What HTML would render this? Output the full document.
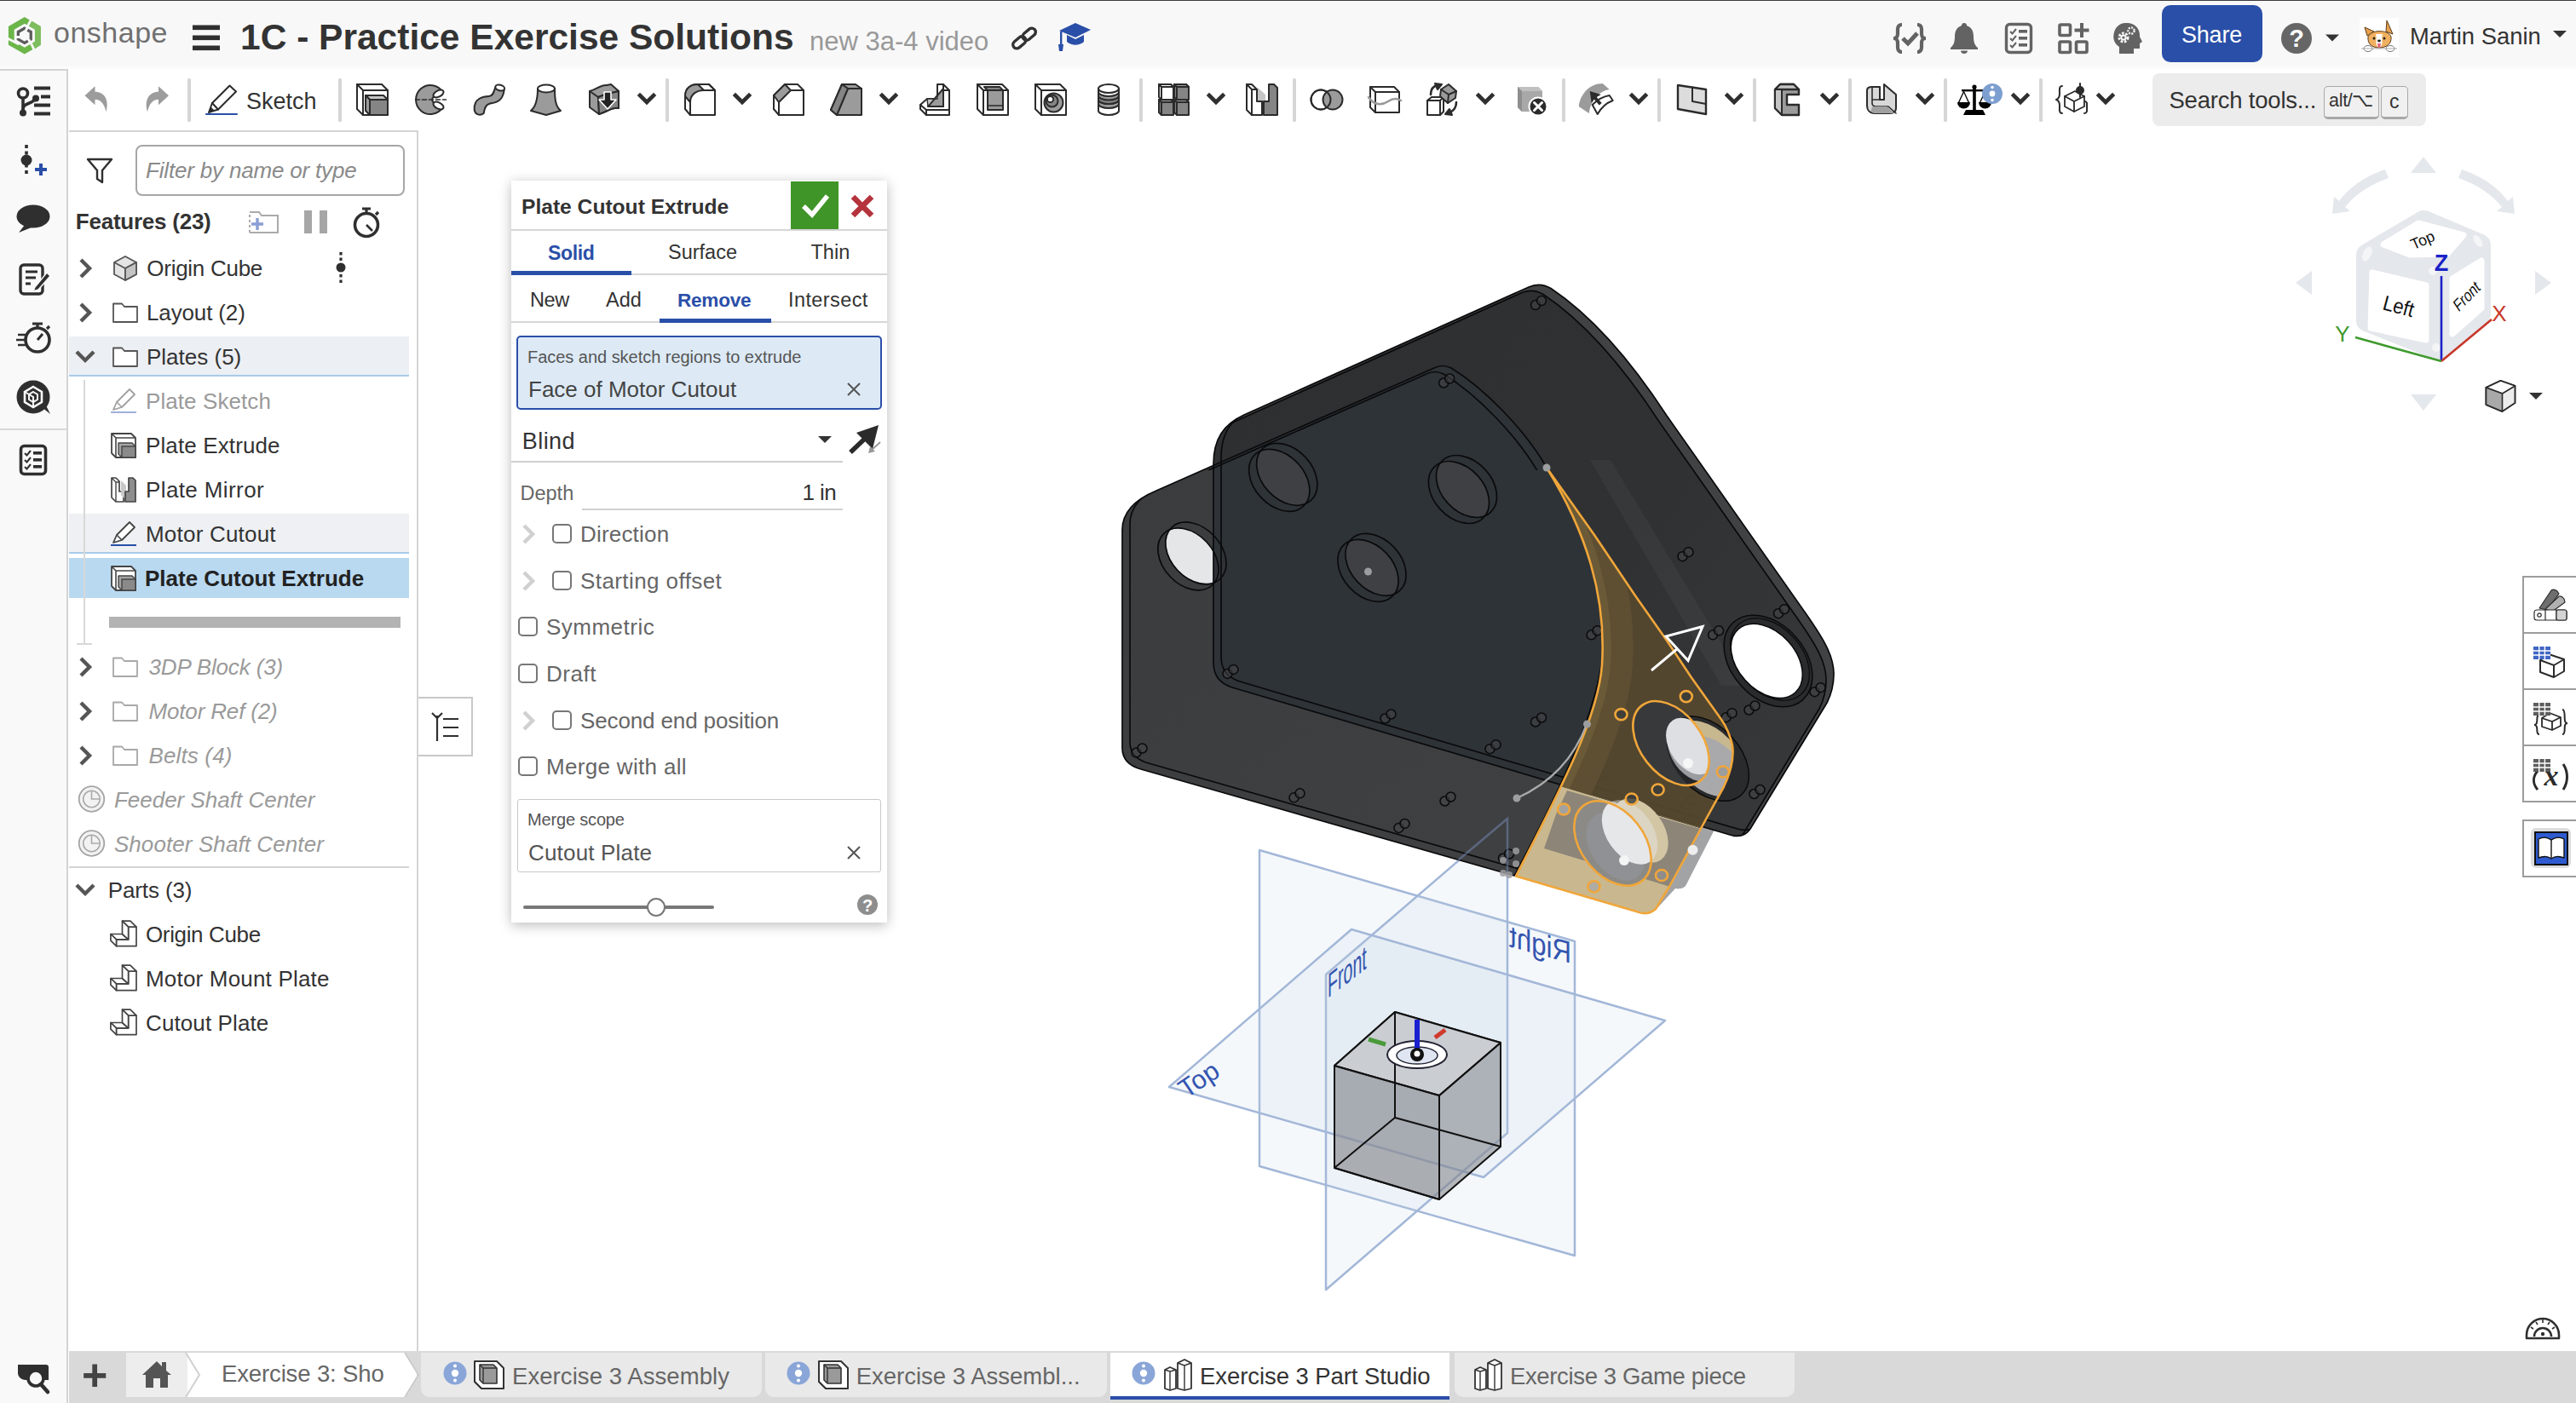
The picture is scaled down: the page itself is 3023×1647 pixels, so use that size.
<!DOCTYPE html>
<html lang="en">
<head>
<meta charset="utf-8">
<title>1C - Practice Exercise Solutions | Exercise 3 Part Studio</title>
<style>
html,body{margin:0;padding:0;}
body{width:3023px;height:1647px;position:relative;overflow:hidden;background:#fff;font-family:"Liberation Sans",sans-serif;color:#333;}
.abs{position:absolute;}
.t{position:absolute;white-space:nowrap;line-height:1;transform:translateY(-50%);}
svg{position:absolute;overflow:visible;}
#topline{left:0;top:0;width:3023px;height:1.4px;background:#3c3c3c;}
#header{left:0;top:0;width:3023px;height:82px;background:linear-gradient(#f8f8f8 0,#f8f8f8 77px,#fff 82px);}
#sidebar{left:0;top:81px;width:78px;height:1566px;background:#f9f9f9;border-right:2px solid #d3d3d3;border-top:2px solid #d3d3d3;box-sizing:content-box;}
#toolbar{left:81px;top:82px;width:2942px;height:71px;background:#fff;}
#fpanel{left:81px;top:153px;width:408px;height:1436px;background:#fff;border-top:2px solid #d4d4d4;border-right:2px solid #d4d4d4;}
#tabbar{left:81px;top:1586px;width:2942px;height:61px;background:#d9d9d9;}

.row{position:absolute;left:81px;width:399px;}
.li{font-size:26px;color:#333;}
.gray{color:#9a9a9a;}
.it{font-style:italic;}
.b{font-weight:bold;}
.dl{font-size:26px;color:#666;}
.cb{position:absolute;width:19px;height:19px;border:2px solid #777;border-radius:5px;background:#fff;}
.tab{position:absolute;top:1588px;height:52px;background:#e9e9e9;border-radius:0 0 10px 10px;}
.tabt{font-size:27.5px;color:#666;}
</style>
</head>
<body>
<div id="header" class="abs"></div>
<div id="topline" class="abs"></div>
<div id="toolbar" class="abs"></div>
<div id="sidebar" class="abs"></div>
<div id="fpanel" class="abs"></div>
<div id="tabbar" class="abs"></div>

<!-- header text -->
<div class="t" style="left:63.0px;top:38px;font-size:34px;color:#707070;letter-spacing:0.5px;">onshape</div>
<div class="t b" style="left:282.0px;top:44px;font-size:42.5px;color:#333;">1C - Practice Exercise Solutions</div>
<div class="t" style="left:950.0px;top:48px;font-size:31px;color:#999;">new 3a-4 video</div>
<div class="abs" style="left:2537px;top:6px;width:118px;height:67px;background:#2a4fa8;border-radius:10px;"></div>
<div class="t" style="left:2560.0px;top:41px;font-size:27px;color:#fff;letter-spacing:-0.21px;">Share</div>
<div class="t" style="left:2828.0px;top:43px;font-size:27.4px;color:#333;">Martin Sanin</div>

<!-- toolbar text -->
<div class="t" style="left:289.0px;top:119px;font-size:27px;color:#333;">Sketch</div>
<div class="abs" style="left:2526px;top:86px;width:321px;height:62px;background:#ececec;border-radius:8px;"></div>
<div class="t" style="left:2545.4px;top:118px;font-size:27.5px;color:#333;letter-spacing:-0.20px;">Search tools...</div>
<div class="abs" style="left:2727px;top:101px;width:63px;height:35px;border:1.5px solid #a8a8a8;border-bottom:3px solid #a8a8a8;border-radius:5px;background:#f0f0f0;"></div>
<div class="t" style="left:2733px;top:119px;font-size:21.5px;color:#333;letter-spacing:-0.3px;">alt/⌥</div>
<div class="abs" style="left:2794px;top:101px;width:30px;height:35px;border:1.5px solid #a8a8a8;border-bottom:3px solid #a8a8a8;border-radius:5px;background:#f0f0f0;"></div>
<div class="t" style="left:2804px;top:119px;font-size:23px;color:#333;">c</div>
<!-- 3D viewport -->
<svg id="vp" width="3023" height="1647" viewBox="0 0 3023 1647" style="left:0;top:0;">
<defs>
<linearGradient id="gBP" x1="1424" y1="400" x2="2150" y2="900" gradientUnits="userSpaceOnUse"><stop offset="0" stop-color="#2e2f31"/><stop offset="0.6" stop-color="#303133"/><stop offset="1" stop-color="#37383a"/></linearGradient>
<linearGradient id="gFP" x1="1317" y1="560" x2="1700" y2="1030" gradientUnits="userSpaceOnUse"><stop offset="0" stop-color="#3b3c3e"/><stop offset="1" stop-color="#3f4042"/></linearGradient>
<path id="pBP" d="M1424,560 L1424,545 C1424,515 1436,498 1460,487 L1794,337 Q1807,331 1820,338.5 C1870,372 1915,425 1956,488 L2119,720 C2140,750 2152,770 2152,791 C2152,805 2148,817 2144,825 L2054,973 Q2046,985 2030,980 L1446,807 Q1424,800 1424,778 Z"/>
<path id="pFP" d="M1317,640 L1317,622 C1317,600 1333,586 1357,576 L1683,432 Q1693,427 1703,432 C1742,456 1790,505 1815,549 C1862,625 1885,700 1882,757 C1878,830 1830,930 1777,1028 L1339,903 Q1317,897 1317,878 Z"/>
<path id="pYL" d="M1815,549 C1862,625 1885,700 1880,780 C1876,840 1835,920 1779,1028.5 L1922,1070.6 Q1934,1075 1943,1067 L1959,1041 L2001,963.5 L2023,923.5 Q2036,896 2033,875 Q2029,858 2021,846 L1985,795.5 L1956.6,752.7 L1919.5,700 L1871,628 Z"/>
<clipPath id="cBP"><use href="#pBP"/></clipPath>
<clipPath id="cFP"><use href="#pFP"/></clipPath>
<clipPath id="cYL"><use href="#pYL"/></clipPath>
<clipPath id="cBelow"><path d="M1700,883 L1837,925 L2030,983 L2100,1004 L2100,1200 L1700,1200 Z"/></clipPath>
<clipPath id="cAbove"><path d="M1700,883 L1837,925 L2030,983 L2100,1004 L2200,300 L1700,300 Z"/></clipPath>
<clipPath id="cTopOnly"><rect x="1300" y="300" width="900" height="252"/></clipPath>
<clipPath id="cLeftOfBP"><rect x="1300" y="500" width="124" height="300"/></clipPath>
<g id="scr"><circle cx="-3.5" cy="2.5" r="5.5"/><circle cx="3.5" cy="-2.5" r="5.5"/></g>
</defs>
<g fill="rgba(196,211,234,0.17)" stroke="#a3b7d8" stroke-width="2.5" stroke-linejoin="round">
<path d="M1478,998 L1848,1105 L1848,1474 L1478,1369 Z"/>
<path d="M1556,1144 L1769,961 L1769,1330 L1556,1514 Z"/>
<path d="M1372,1276 L1586,1091 L1954,1198 L1741,1382 Z"/>
</g>
<g stroke="#111" stroke-width="2" stroke-linejoin="round">
<path d="M1566,1251 L1637,1188 L1761,1224 L1761,1346 L1689,1408 L1566,1371 Z" fill="rgba(128,130,134,0.55)"/>
<path d="M1566,1251 L1637,1188 L1761,1224 L1689,1286 Z" fill="rgba(225,228,232,0.55)"/>
<path d="M1566,1251 L1689,1286 L1689,1408 L1566,1371 Z" fill="rgba(150,153,158,0.25)"/>
<path d="M1637,1188 L1637,1312 L1566,1371 M1637,1312 L1761,1346 M1689,1286 L1689,1408 M1689,1286 L1761,1224" fill="none"/>
</g>
<ellipse cx="1663" cy="1238" rx="35" ry="16" fill="#fff" stroke="#223" stroke-width="2"/>
<ellipse cx="1663" cy="1239" rx="24" ry="10" fill="#dfe6f1" stroke="#223" stroke-width="1.5"/>
<line x1="1663" y1="1197" x2="1663" y2="1236" stroke="#1a1fd0" stroke-width="6"/>
<line x1="1606" y1="1220" x2="1626" y2="1226" stroke="#4a9a3a" stroke-width="5"/>
<line x1="1684" y1="1218" x2="1696" y2="1209" stroke="#d0392b" stroke-width="5"/>
<circle cx="1663" cy="1238" r="8" fill="#111"/><circle cx="1663" cy="1237" r="3.5" fill="#fff"/>
<text transform="matrix(0.49,-0.379,0,1,1558,1172)" font-family="Liberation Sans, sans-serif" font-size="40" fill="#3355b0">Front</text>
<text transform="translate(1392,1290) rotate(-34)" font-family="Liberation Sans, sans-serif" font-size="31" fill="#3355b0">Top</text>
<text transform="matrix(-0.868,-0.238,0,1,1844,1131)" font-family="Liberation Sans, sans-serif" font-size="36" fill="#3355b0">Right</text>
<path d="M2001,964 L2010,972 L1978,1040 Q1974,1044 1966,1043 L1944,1067 L1959,1041 Z" fill="#a2a3a5"/>
<path d="M2001,964 L2012,974 L1979,1038 Q1975,1044 1968,1043 L1955,1040 Z" fill="#a2a3a5"/>
<use href="#pFP" fill="url(#gFP)"/>
<use href="#pBP" fill="#414244"/>
<g clip-path="url(#cBP)"><use href="#pBP" fill="url(#gBP)" transform="translate(-9,7)"/></g>
<g clip-path="url(#cBP)"><use href="#pFP" fill="#2e3338"/></g>
<g clip-path="url(#cBP)"><path d="M1866,540 L1890,540 L2050,805 L2020,805 Z" fill="#ffffff" fill-opacity="0.035"/></g>
<g clip-path="url(#cLeftOfBP)">
<clipPath id="h1"><ellipse cx="1403.3" cy="648.4" rx="41.5" ry="29.5" transform="rotate(47 1403.3 648.4)"/></clipPath>
<g clip-path="url(#h1)"><ellipse cx="1394.4" cy="656.4" rx="41.5" ry="29.5" transform="rotate(47 1394.4 656.4)" fill="#e4e6e8"/></g>
</g>
<clipPath id="hh0"><ellipse cx="1510.3" cy="556.8" rx="41.5" ry="29.5" transform="rotate(47 1510.3 556.8)" /></clipPath>
<g clip-path="url(#hh0)"><ellipse cx="1501.3" cy="563.8" rx="41.5" ry="29.5" transform="rotate(47 1501.3 563.8)" fill="#3f4043"/></g>
<clipPath id="hh1"><ellipse cx="1721" cy="571" rx="41.5" ry="29.5" transform="rotate(47 1721 571)" /></clipPath>
<g clip-path="url(#hh1)"><ellipse cx="1712" cy="578" rx="41.5" ry="29.5" transform="rotate(47 1712 578)" fill="#3f4043"/></g>
<clipPath id="hh2"><ellipse cx="1614.5" cy="662.8" rx="41.5" ry="29.5" transform="rotate(47 1614.5 662.8)" /></clipPath>
<g clip-path="url(#hh2)"><ellipse cx="1605.5" cy="669.8" rx="41.5" ry="29.5" transform="rotate(47 1605.5 669.8)" fill="#3f4043"/></g>
<circle cx="1605.5" cy="671" r="4.5" fill="#9b9c9e"/>
<g fill="none" stroke="#0a0a0b" stroke-width="1.7" stroke-linejoin="round">
<use href="#pFP"/>
<g clip-path="url(#cFP)"><use href="#pFP" transform="translate(9,-7)"/><g clip-path="url(#cTopOnly)"><use href="#pFP" transform="translate(-9,7)"/></g></g>
<g clip-path="url(#cYL)"><path d="M1815,549 C1862,625 1885,700 1880,780 C1876,840 1835,920 1779,1028.5" transform="translate(9,-5)" stroke-opacity="0.55" stroke-width="1.4"/></g>
<use href="#pBP"/>
<g clip-path="url(#cBP)"><use href="#pBP" transform="translate(9,-7)"/><use href="#pBP" transform="translate(-9,7)"/></g>
<ellipse cx="1501.3" cy="563.8" rx="41.5" ry="29.5" transform="rotate(47 1501.3 563.8)" />
<ellipse cx="1510.3" cy="556.8" rx="41.5" ry="29.5" transform="rotate(47 1510.3 556.8)" />
<ellipse cx="1712" cy="578" rx="41.5" ry="29.5" transform="rotate(47 1712 578)" />
<ellipse cx="1721" cy="571" rx="41.5" ry="29.5" transform="rotate(47 1721 571)" />
<ellipse cx="1605.5" cy="669.8" rx="41.5" ry="29.5" transform="rotate(47 1605.5 669.8)" />
<ellipse cx="1614.5" cy="662.8" rx="41.5" ry="29.5" transform="rotate(47 1614.5 662.8)" />
<ellipse cx="1394.4" cy="656.4" rx="41.5" ry="29.5" transform="rotate(47 1394.4 656.4)" />
<ellipse cx="1403.4" cy="649.4" rx="41.5" ry="29.5" transform="rotate(47 1403.4 649.4)" />
</g>
<ellipse cx="2075" cy="776" rx="61" ry="43" transform="rotate(48 2075 776)" fill="#2a2b2d" stroke="#0a0a0b" stroke-width="1.5"/>
<ellipse cx="2077" cy="774" rx="55" ry="38" transform="rotate(48 2077 774)" fill="none" stroke="#0a0a0b" stroke-width="1.2"/>
<ellipse cx="2073.3" cy="775.8" rx="50" ry="34" transform="rotate(48 2073.3 775.8)" fill="#ffffff" stroke="#0a0a0b" stroke-width="1.5"/>
<g fill="rgba(70,71,74,0.5)" stroke="#0a0a0b" stroke-width="1.5">
<use href="#scr" x="1697.7" y="447"/>
<use href="#scr" x="1805.5" y="355.6"/>
<use href="#scr" x="1978" y="650.7"/>
<use href="#scr" x="2090.5" y="717.7"/>
<use href="#scr" x="1337" y="881"/>
<use href="#scr" x="1444" y="788.4"/>
<use href="#scr" x="1629" y="841"/>
<use href="#scr" x="1752" y="876.7"/>
<use href="#scr" x="1522" y="933.8"/>
<use href="#scr" x="1699" y="938"/>
<use href="#scr" x="1645" y="969.4"/>
<use href="#scr" x="1767.5" y="1005"/>
<use href="#scr" x="1871" y="742.8"/>
<use href="#scr" x="1805.5" y="845"/>
<use href="#scr" x="2013.6" y="742.8"/>
<use href="#scr" x="2133" y="809.7"/>
<use href="#scr" x="2056" y="831"/>
<use href="#scr" x="2029" y="839.7"/>
<use href="#scr" x="2062" y="929.5"/>
<use href="#scr" x="1945" y="852.5"/>
<use href="#scr" x="1875" y="912"/>
<use href="#scr" x="1982" y="942"/>
</g>
<g clip-path="url(#cYL)">
<g clip-path="url(#cAbove)"><use href="#pYL" fill="#55472e" fill-opacity="0.94"/>
<path d="M1815,549 C1862,625 1885,700 1880,780 C1876,840 1835,920 1779,1028.5" fill="none" stroke="#5f5034" stroke-width="72" stroke-opacity="0.9"/>
<path d="M1815,549 C1862,625 1885,700 1880,780 C1876,840 1835,920 1779,1028.5" fill="none" stroke="#6c5b38" stroke-width="20" stroke-opacity="0.95"/>
</g>
<g clip-path="url(#cBelow)"><use href="#pYL" fill="#c9b88f"/>
<path d="M1839,928 L1999,974 L1966,1043 L1944,1036 L1812,996 L1826,956 Z" fill="#8d8578"/>
</g>
</g>
<ellipse cx="2004" cy="890.5" rx="58" ry="38" transform="rotate(47 2004 890.5)" fill="#2a2b2d" stroke="#0a0a0b" stroke-width="1.4"/>
<g clip-path="url(#cYL)"><ellipse cx="2004" cy="890.5" rx="52" ry="34" transform="rotate(47 2004 890.5)" fill="#c8b88f"/>
<clipPath id="uh"><ellipse cx="2004" cy="890.5" rx="52" ry="34" transform="rotate(47 2004 890.5)" /></clipPath>
<g clip-path="url(#uh)"><ellipse cx="2012" cy="905" rx="48" ry="30" transform="rotate(47 2012 905)" fill="#a9a9ab"/></g>
</g>
<clipPath id="ue"><ellipse cx="1961" cy="872.5" rx="56" ry="36" transform="rotate(52 1961 872.5)" /></clipPath>
<g clip-path="url(#ue)">
<ellipse cx="1961" cy="872.5" rx="56" ry="36" transform="rotate(52 1961 872.5)" fill="#38393b"/>
<ellipse cx="2004" cy="890.5" rx="58" ry="38" transform="rotate(47 2004 890.5)" fill="#242527"/>
<ellipse cx="1986" cy="884" rx="37" ry="24" transform="rotate(55 1986 884)" fill="#9b9c9f"/>
<ellipse cx="1984" cy="876" rx="37" ry="24" transform="rotate(55 1984 876)" fill="#dedfe2"/>
</g>
<circle cx="1981" cy="896" r="6" fill="#f6f6f6"/>
<g clip-path="url(#cYL)"><ellipse cx="1925" cy="975" rx="42" ry="27" transform="rotate(55 1925 975)" fill="#d3c6a4"/><ellipse cx="1912.5" cy="977" rx="42" ry="27" transform="rotate(55 1912.5 977)" fill="#e6e7e9" fill-opacity="0.45"/></g>
<clipPath id="le"><ellipse cx="1892.5" cy="990" rx="56" ry="37" transform="rotate(52 1892.5 990)" /></clipPath>
<g clip-path="url(#le)">
<ellipse cx="1892.5" cy="990" rx="56" ry="37" transform="rotate(52 1892.5 990)" fill="#8b8a86"/>
<ellipse cx="1896" cy="994" rx="44" ry="29" transform="rotate(55 1896 994)" fill="#8f9194"/>
<ellipse cx="1912.5" cy="977" rx="42" ry="27" transform="rotate(55 1912.5 977)" fill="#e6e7e9"/>
</g>
<circle cx="1906" cy="1010" r="6" fill="#f4f4f4"/>
<g fill="none" stroke="#f0a63a" stroke-width="2.6" stroke-linejoin="round">
<use href="#pYL"/>
<ellipse cx="1961" cy="872.5" rx="56" ry="36" transform="rotate(52 1961 872.5)" />
<ellipse cx="1892.5" cy="990" rx="56" ry="37" transform="rotate(52 1892.5 990)" />
<ellipse cx="1835" cy="950" rx="7" ry="6.5" fill="#a9a9a9" fill-opacity="0.8"/>
<ellipse cx="1914.7" cy="938" rx="7" ry="6.5" fill="#3a3b3b" fill-opacity="0.8"/>
<ellipse cx="1945.6" cy="927" rx="7" ry="6.5" fill="#3a3b3b" fill-opacity="0.8"/>
<ellipse cx="1870.5" cy="1040.8" rx="7" ry="6.5" fill="#a9a9a9" fill-opacity="0.8"/>
<ellipse cx="1950" cy="1027.5" rx="7" ry="6.5" fill="#8f8f8f" fill-opacity="0.8"/>
<ellipse cx="2021.9" cy="906" rx="7" ry="6.5" fill="#9a9a9a" fill-opacity="0.8"/>
<ellipse cx="1978.8" cy="817.6" rx="7" ry="6.5" fill="#3a3b3b" fill-opacity="0.8"/>
<ellipse cx="1902.5" cy="838.6" rx="7" ry="6.5" fill="#3a3b3b" fill-opacity="0.8"/>
</g>
<circle cx="1986.5" cy="997.7" r="6" fill="#eee"/>
<path d="M1769,1027 L1769,961 L1711,1010" fill="none" stroke="#7f97c8" stroke-width="2.5" stroke-opacity="0.45"/>
<path d="M1780,937 Q1840,910 1862,850" fill="none" stroke="#a9aaac" stroke-width="2.2"/>
<circle cx="1780" cy="937" r="4.5" fill="#9d9ea0"/>
<circle cx="1862.5" cy="850" r="4.5" fill="#9d9ea0"/>
<circle cx="1815" cy="549" r="4.5" fill="#9d9ea0"/>
<circle cx="1779" cy="999" r="4" fill="#9d9ea0" fill-opacity="0.85"/>
<circle cx="1764" cy="1010" r="4" fill="#9d9ea0" fill-opacity="0.85"/>
<circle cx="1779" cy="1014" r="4" fill="#9d9ea0" fill-opacity="0.85"/>
<circle cx="1764" cy="1025" r="4" fill="#9d9ea0" fill-opacity="0.85"/>
<circle cx="1771" cy="1027" r="4" fill="#9d9ea0" fill-opacity="0.85"/>
<g fill="none" stroke="#fff" stroke-width="3" stroke-linejoin="miter"><path d="M1938,787 L1969,761"/><path d="M1998,735.5 L1955,747 L1981,775.5 Z"/></g>
</svg>
<!-- feature panel -->
<div class="abs" style="left:159px;top:170px;width:312px;height:56px;border:2px solid #a6a6a6;border-radius:8px;background:#fff;"></div>
<div class="t it" style="left:171.0px;top:200px;font-size:26px;color:#8a8a8a;letter-spacing:-0.18px;">Filter by name or type</div>
<div class="t b" style="left:88.8px;top:260px;font-size:26px;color:#333;letter-spacing:-0.24px;">Features (23)</div>

<div class="row" style="top:395px;height:45px;background:#eceff3;border-bottom:2px solid #a9cbea;"></div>
<div class="row" style="top:603px;height:45px;background:#eef0f3;border-bottom:2px solid #a9cbea;"></div>
<div class="row" style="top:655px;height:47px;background:#b9d9f1;"></div>
<div class="abs" style="left:128px;top:724px;width:342px;height:13px;background:#b3b3b3;"></div>
<div class="abs" style="left:98px;top:446px;width:2px;height:310px;background:#d8d8d8;"></div>
<div class="abs" style="left:90px;top:755px;width:18px;height:2px;background:#d8d8d8;"></div>
<div class="abs" style="left:81px;top:1017px;width:399px;height:2px;background:#d4d4d4;"></div>

<div class="t li" style="left:172.3px;top:315px;letter-spacing:-0.27px;">Origin Cube</div>
<div class="t li" style="left:172.0px;top:367px;letter-spacing:-0.14px;">Layout (2)</div>
<div class="t li" style="left:172.0px;top:419px;">Plates (5)</div>
<div class="t li gray" style="left:171.0px;top:471px;letter-spacing:0.08px;">Plate Sketch</div>
<div class="t li" style="left:171.0px;top:523px;letter-spacing:0.12px;">Plate Extrude</div>
<div class="t li" style="left:171.0px;top:575px;letter-spacing:0.39px;">Plate Mirror</div>
<div class="t li" style="left:171.0px;top:627px;letter-spacing:0.21px;">Motor Cutout</div>
<div class="t li b" style="left:170px;top:679px;color:#222;">Plate Cutout Extrude</div>
<div class="t li gray it" style="left:174.5px;top:783px;letter-spacing:-0.15px;">3DP Block (3)</div>
<div class="t li gray it" style="left:174.5px;top:835px;letter-spacing:-0.16px;">Motor Ref (2)</div>
<div class="t li gray it" style="left:174.5px;top:887px;letter-spacing:0.14px;">Belts (4)</div>
<div class="t li gray it" style="left:133.9px;top:939px;">Feeder Shaft Center</div>
<div class="t li gray it" style="left:133.9px;top:991px;letter-spacing:0.09px;">Shooter Shaft Center</div>
<div class="t li" style="left:126.8px;top:1045px;letter-spacing:-0.13px;">Parts (3)</div>
<div class="t li" style="left:171px;top:1097px;letter-spacing:-0.36px;">Origin Cube</div>
<div class="t li" style="left:171.0px;top:1149px;letter-spacing:0.19px;">Motor Mount Plate</div>
<div class="t li" style="left:171.0px;top:1201px;letter-spacing:0.11px;">Cutout Plate</div>

<!-- panel handle -->
<div class="abs" style="left:491px;top:818px;width:62px;height:66px;background:#fff;border:2px solid #c8c8c8;border-left:none;"></div>
<!-- dialog -->
<div class="abs" style="left:600px;top:212px;width:441px;height:871px;background:#fff;box-shadow:0 3px 14px rgba(0,0,0,0.27);"></div>
<div class="t b" style="left:612px;top:243px;font-size:24.6px;color:#333;">Plate Cutout Extrude</div>
<div class="abs" style="left:928px;top:213px;width:56px;height:56px;background:#3f9527;"></div>
<div class="abs" style="left:600px;top:269px;width:441px;height:2px;background:#d6d6d6;"></div>
<div class="t b" style="left:643.0px;top:297px;font-size:23px;color:#2a4fa8;letter-spacing:-0.37px;">Solid</div>
<div class="t" style="left:784.0px;top:297px;font-size:23.5px;color:#333;">Surface</div>
<div class="t" style="left:951.5px;top:297px;font-size:23.5px;color:#333;">Thin</div>
<div class="abs" style="left:600px;top:321px;width:441px;height:2px;background:#d6d6d6;"></div>
<div class="abs" style="left:600px;top:318px;width:141px;height:5px;background:#2a4fa8;"></div>
<div class="t" style="left:622.0px;top:353px;font-size:23.5px;color:#333;letter-spacing:-0.37px;">New</div>
<div class="t" style="left:711.0px;top:353px;font-size:23.5px;color:#333;">Add</div>
<div class="t b" style="left:795.0px;top:353px;font-size:22.6px;color:#2a4fa8;letter-spacing:-0.28px;">Remove</div>
<div class="t" style="left:925.0px;top:353px;font-size:23.5px;color:#333;letter-spacing:0.40px;">Intersect</div>
<div class="abs" style="left:600px;top:377px;width:441px;height:2px;background:#d6d6d6;"></div>
<div class="abs" style="left:774px;top:374px;width:131px;height:5px;background:#2a4fa8;"></div>

<div class="abs" style="left:606px;top:394px;width:425px;height:83px;background:#ddeaf6;border:2px solid #2a4fa8;border-radius:5px;"></div>
<div class="t" style="left:619.0px;top:419px;font-size:20px;color:#555;letter-spacing:-0.03px;">Faces and sketch regions to extrude</div>
<div class="t" style="left:620.0px;top:457px;font-size:26px;color:#444;">Face of Motor Cutout</div>

<div class="t" style="left:612.8px;top:518px;font-size:27px;color:#333;letter-spacing:0.43px;">Blind</div>
<div class="abs" style="left:600px;top:541px;width:389px;height:2px;background:#d0d0d0;"></div>
<div class="t" style="left:610.5px;top:580px;font-size:23.5px;color:#666;">Depth</div>
<div class="t" style="left:941.6px;top:578px;font-size:26px;color:#333;letter-spacing:-0.63px;">1 in</div>
<div class="abs" style="left:683px;top:597px;width:306px;height:2px;background:#d0d0d0;"></div>

<div class="cb" style="left:648px;top:615px;"></div>
<div class="t dl" style="left:681.0px;top:627px;letter-spacing:0.19px;">Direction</div>
<div class="cb" style="left:648px;top:670px;"></div>
<div class="t dl" style="left:681.0px;top:682px;letter-spacing:0.42px;">Starting offset</div>
<div class="cb" style="left:608px;top:724px;"></div>
<div class="t dl" style="left:641.0px;top:736px;letter-spacing:0.49px;">Symmetric</div>
<div class="cb" style="left:608px;top:779px;"></div>
<div class="t dl" style="left:641.0px;top:791px;letter-spacing:0.53px;">Draft</div>
<div class="cb" style="left:648px;top:834px;"></div>
<div class="t dl" style="left:681.0px;top:846px;letter-spacing:-0.13px;">Second end position</div>
<div class="cb" style="left:608px;top:888px;"></div>
<div class="t dl" style="left:641.0px;top:900px;letter-spacing:0.32px;">Merge with all</div>

<div class="abs" style="left:607px;top:938px;width:425px;height:84px;background:#fff;border:1px solid #c8c8c8;border-radius:3px;"></div>
<div class="t" style="left:619.0px;top:962px;font-size:20px;color:#555;letter-spacing:-0.17px;">Merge scope</div>
<div class="t" style="left:620.0px;top:1001px;font-size:26px;color:#555;letter-spacing:0.18px;">Cutout Plate</div>
<div class="abs" style="left:614px;top:1063px;width:224px;height:4px;background:#777;border-radius:2px;"></div>
<div class="abs" style="left:759px;top:1054px;width:18px;height:18px;border:2px solid #777;border-radius:50%;background:#fff;"></div>
<div class="abs" style="left:1006px;top:1050px;width:24px;height:24px;border-radius:50%;background:#8e8e8e;"></div>
<div class="t b" style="left:1012px;top:1063px;font-size:20px;color:#fff;">?</div>
<!-- bottom tabs -->
<div class="abs" style="left:148px;top:1588px;width:341px;height:52px;background:#fff;"></div>
<div class="abs" style="left:148px;top:1588px;width:72px;height:52px;background:#ededed;"></div>
<div class="t tabt" style="left:260.0px;top:1613px;letter-spacing:-0.13px;">Exercise 3: Sho</div>
<div class="tab" style="left:494px;width:400px;"></div>
<div class="t tabt" style="left:601.0px;top:1616px;letter-spacing:0.07px;">Exercise 3 Assembly</div>
<div class="tab" style="left:898px;width:401px;"></div>
<div class="t tabt" style="left:1004.7px;top:1616px;">Exercise 3 Assembl...</div>
<div class="tab" style="left:1303px;width:398px;background:#fff;border-bottom:4px solid #2a4fa8;border-radius:0;height:51px;"></div>
<div class="t tabt" style="left:1408.0px;top:1616px;color:#333;letter-spacing:-0.07px;">Exercise 3 Part Studio</div>
<div class="tab" style="left:1707px;width:399px;"></div>
<div class="t tabt" style="left:1772.0px;top:1616px;letter-spacing:-0.36px;">Exercise 3 Game piece</div>
<div class="t" style="left:96px;top:1614px;font-size:52px;color:#444;font-weight:bold;">+</div>
<!-- toolbar icons -->
<svg width="3023" height="160" viewBox="0 0 3023 160" style="left:0;top:0;">
<g stroke="#2b2b2b" stroke-width="2" stroke-linejoin="round" stroke-linecap="round" fill="#fff">
<g transform="translate(113.5,117.3)" ><path d="M-14,-5 L-2,-16 L-2,-9.5 C9,-9.5 15,0 11,14 C9,5 5,-0.5 -2,-0.5 L-2,6 Z" fill="#9c9c9c" stroke="none"/></g>
<g transform="translate(184,117.3) scale(-1,1)" ><path d="M-14,-5 L-2,-16 L-2,-9.5 C9,-9.5 15,0 11,14 C9,5 5,-0.5 -2,-0.5 L-2,6 Z" fill="#9c9c9c" stroke="none"/></g>
<g transform="translate(260,117)" ><path d="M-15,15 L-11,4 L9.5,-16.5 L17,-9.5 L-4,11.5 Z" fill="#fff"/><path d="M-11,4 L-4,11.5" fill="none"/><path d="M-15,15 L-12.5,8.5 L-8.5,12.5 Z" fill="#2b2b2b" stroke="none"/><path d="M-18,17 L18,17" stroke="#2a4fa8" stroke-width="2.2"/></g>
<g transform="translate(437,117)" ><path d="M-18,-18 L11,-18 L18,-11 L18,18 L-11,18 L-18,11 Z"/><path d="M-18,-18 L-11,-11 L18,-11 M-11,-11 L-11,18" fill="none"/><path d="M-8,-5 L13,-5 L18,0 L-3,0 Z" fill="#c4c4c4"/><path d="M-8,-5 L-3,0 L-3,18 L-8,13 Z" fill="#9b9b9b"/><rect x="-3" y="0" width="21" height="18" fill="#858585"/></g>
<g transform="translate(505.5,117)" ><path d="M14,-9 A17,17 0 1 0 14,9 L3,3 A4,4 0 0 1 3,-3 Z" fill="#9b9b9b"/><ellipse cx="9" cy="-7" rx="6.5" ry="3.6" transform="rotate(-28 9 -7)"/><ellipse cx="9" cy="7" rx="6.5" ry="3.6" transform="rotate(28 9 7)"/><path d="M-18,0 L18,0" stroke-dasharray="5 3" stroke-width="1.6" fill="none"/></g>
<g transform="translate(573.7,117)" ><path d="M-17,12 C-18,-2 -6,-4 0,-4 C6,-4 6,-12 8,-15 L18,-12 C17,-2 12,3 4,4 C-4,5 -5,10 -6,16 C-10,19 -16,18 -17,12 Z" fill="#9b9b9b"/><ellipse cx="13" cy="-14" rx="5.5" ry="3.3" transform="rotate(15 13 -14)"/></g>
<g transform="translate(641,117)" ><path d="M-10,-13 C-10,0 -12,8 -18,13 L0,18 L17,13 C11,8 10,0 10,-13 Z" fill="#9b9b9b"/><ellipse cx="0" cy="-13" rx="10" ry="4.5"/></g>
<g transform="translate(709,117)" ><path d="M-17,-10 C-8,-12 -4,-18 3,-17 L8,-18 L17,-10 L17,10 C10,8 4,14 -6,17 L-17,9 Z" fill="#9b9b9b"/><path d="M-17,-10 L-7,-3 C0,-6 8,-8 17,-10 M-7,-3 L-6,17" fill="none"/><path d="M-7,-3 C0,-6 8,-8 17,-10 L17,10 C10,8 4,14 -6,17 Z" fill="#858585"/><path d="M0,-9 L8,-9 L8,0 L14,0 L4,11 L-6,0 L0,0 Z" fill="#222" stroke="#fff" stroke-width="1.6"/></g>
<g transform="translate(821,117)" ><path d="M-17,-4 C-17,-14 -10,-18 -2,-18 L11,-18 L18,-11 L18,18 L-11,18 L-17,11 Z"/><path d="M-17,-4 C-17,-14 -10,-18 -2,-18 L5,-11 C-4,-11 -11,-6 -11,3 Z" fill="#9b9b9b"/><path d="M5,-11 L18,-11 M-11,3 L-11,18 M11,-18 L18,-11" fill="none"/></g>
<g transform="translate(925,117)" ><path d="M-17,-5 L-4,-18 L11,-18 L18,-11 L18,18 L-11,18 L-17,11 Z"/><path d="M-17,-5 L-4,-18 L3,-11 L-11,3 Z" fill="#9b9b9b"/><path d="M3,-11 L18,-11 M-11,3 L-11,18 M-17,-5 L-17,11" fill="none"/></g>
<g transform="translate(993,117)" ><path d="M-5,-18 L11,-18 L18,-13 L18,18 L-11,18 L-18,12 Z" fill="#9b9b9b"/><path d="M-5,-18 L2,-13 L18,-13 M2,-13 L-11,18" fill="none"/><path d="M-5,-18 L2,-13 L-11,18 L-18,12 Z" fill="#858585"/></g>
<g transform="translate(1097,117)" ><path d="M-17,6 L-9,-1 L3,-1 L3,-18 L10,-18 L17,-11 L17,18 L-10,18 L-17,11 Z"/><path d="M-8,8 L10,-13 L10,8 Z" fill="#9b9b9b"/><path d="M-8,8 L3,-5 L3,-1 L-9,-1 Z" fill="#c4c4c4" stroke-width="1.4"/><path d="M-17,6 L-10,12 L17,12 M-10,12 L-10,18 M10,-18 L10,8 M10,-11 L17,-11" fill="none"/></g>
<g transform="translate(1165,117)" ><path d="M-18,-18 L11,-18 L18,-11 L18,18 L-11,18 L-18,11 Z"/><path d="M-18,-18 L-11,-11 L18,-11 M-11,-11 L-11,18" fill="none"/><path d="M-6,-11 L12,-11 L12,12 L-6,12 Z" fill="#9b9b9b"/><path d="M-10,-15 L8,-15 L12,-11 L-6,-11 Z" fill="#858585"/><path d="M-6,7 L12,7" fill="none" stroke-width="1.4"/></g>
<g transform="translate(1233,117)" ><path d="M-18,-18 L11,-18 L18,-11 L18,18 L-11,18 L-18,11 Z"/><path d="M-18,-18 L-11,-11 L18,-11 M-11,-11 L-11,18" fill="none"/><circle cx="3.5" cy="3.5" r="11" fill="#9b9b9b"/><circle cx="1.5" cy="1.5" r="7" fill="#858585"/><circle cx="-0.5" cy="-0.5" r="3.6" fill="#fff"/></g>
<g transform="translate(1301,117)" ><path d="M-12,-13 L-12,13 A12,5 0 0 0 12,13 L12,-13 Z"/><path d="M-12,-9 A12,5 0 0 0 12,-9 L12,-4 A12,5 0 0 1 -12,-4 Z M-12,0 A12,5 0 0 0 12,0 L12,5 A12,5 0 0 1 -12,5 Z" fill="#9b9b9b"/><path d="M-12,-4.500 A12,5 0 0 0 12,-4.5 L12,0 A12,5 0 0 1 -12,0 Z" fill="#858585"/><ellipse cx="0" cy="-13" rx="12" ry="5"/></g>
<g transform="translate(1377,117)" ><g transform="translate(-9,-9)"><path d="M-8,-9 L6,-9 L9,-6 L9,9 L-5,9 L-8,6 Z" fill="#fff"/><path d="M-8,-9 L-5,-6 L9,-6 M-5,-6 L-5,9" fill="none"/><path d="M-8,-9 L6,-9 L9,-6 L-5,-6 Z" fill="#fff"/></g><g transform="translate(9,-9)"><path d="M-8,-9 L6,-9 L9,-6 L9,9 L-5,9 L-8,6 Z" fill="#858585"/><path d="M-8,-9 L-5,-6 L9,-6 M-5,-6 L-5,9" fill="none"/><path d="M-8,-9 L6,-9 L9,-6 L-5,-6 Z" fill="#9b9b9b"/></g><g transform="translate(-9,9)"><path d="M-8,-9 L6,-9 L9,-6 L9,9 L-5,9 L-8,6 Z" fill="#858585"/><path d="M-8,-9 L-5,-6 L9,-6 M-5,-6 L-5,9" fill="none"/><path d="M-8,-9 L6,-9 L9,-6 L-5,-6 Z" fill="#9b9b9b"/></g><g transform="translate(9,9)"><path d="M-8,-9 L6,-9 L9,-6 L9,9 L-5,9 L-8,6 Z" fill="#858585"/><path d="M-8,-9 L-5,-6 L9,-6 M-5,-6 L-5,9" fill="none"/><path d="M-8,-9 L6,-9 L9,-6 L-5,-6 Z" fill="#9b9b9b"/></g></g>
<g transform="translate(1481,117)" ><path d="M-5,-14 L4,-6 L4,16 L-5,8 Z" fill="#c4c4c4" stroke="none"/><path d="M-18,-18 L-12,-18 L-6,-12 L-6,2 L0,2 L0,18 L-12,18 L-18,12 Z"/><path d="M-18,-18 L-12,-12 L-12,18 M-12,-12 L-6,-12" fill="none"/><path d="M8,-18 L14,-18 L18,-14 L18,18 L2,18 L2,2 L8,2 Z" fill="#858585"/></g>
<g transform="translate(1557,117)" ><circle cx="-7" cy="0" r="11.5"/><circle cx="7" cy="0" r="11.5" fill="#9b9b9b"/><circle cx="-7" cy="0" r="11.5" fill="none"/></g>
<g transform="translate(1625,117)" ><path d="M-17,-15 L11,-15 L17,-9 L17,15 L-11,15 L-17,9 Z"/><path d="M-17,-15 L-11,-9 L17,-9 M-11,-9 L-11,15" fill="none"/><path d="M-19,-3 C-12,8 -2,6 4,2 C10,-2 14,-2 19,1" fill="none" stroke="#9a9a9a" stroke-width="2.6"/></g>
<g transform="translate(1693,117)" ><path d="M-18,1 L-13,-3 L1,-3 L1,14 L-3,18 L-18,18 Z"/><path d="M-18,1 L-3,1 L1,-3 M-3,1 L-3,18" fill="none"/><path d="M7,-18 L16,-10 L15,-2 L6,4 L-3,-4 L-2,-12 Z" fill="#9b9b9b"/><path d="M-2,-12 L7,-6 L16,-10 M7,-6 L6,4" fill="none"/><path d="M-14,-6 C-14,-12 -11,-16 -6,-17" fill="none" stroke-width="2.6"/><path d="M-9,-19 L-1,-18 L-6,-12 Z" fill="#2b2b2b"/><path d="M16,3 C16,9 13,13 8,15" fill="none" stroke-width="2.6"/><path d="M11,18 L3,17 L8,11 Z" fill="#2b2b2b"/></g>
<g transform="translate(1798,117)" ><path d="M-17,-15 L7,-15 L12,-10 L12,14 L-12,14 L-17,9 Z" fill="#a8a8a8" stroke="none"/><path d="M-17,-15 L7,-15 L12,-10 L-12,-10 Z" fill="#c0c0c0" stroke="none"/><path d="M-17,-15 L-12,-10 L-12,14 L-17,9 Z" fill="#8e8e8e" stroke="none"/><circle cx="7" cy="8" r="10.5" fill="#2b2b2b" stroke="#fff" stroke-width="2"/><path d="M2.500,3.500 L11.500,12.500 M11.500,3.500 L2.500,12.500" stroke="#fff" stroke-width="3" fill="none"/></g>
<g transform="translate(1872.7,117)" ><path d="M-20,8 C-18,-8 -6,-19 8,-19 L16,-12 C4,-10 -6,0 -8,16 Z" fill="#9b9b9b" stroke="none"/><path d="M-4,6 C2,0 10,-4 16,-5 L20,1 C12,4 6,10 2,17 Z"/><path d="M-7,-10 L6,-6 L1,-3 L7,4 L4,6.500 L-2,-0.500 L-5,4 Z" fill="#2b2b2b" stroke="none"/></g>
<g transform="translate(1986,117)" ><path d="M-17,-17 L16,-12 L16,17 L-17,11 Z" fill="#dcdcdc" stroke-width="2.4"/><path d="M0,-14.500 L0,2 L16,5" fill="none"/></g>
<g transform="translate(2097,117)" ><path d="M-14,-12 L-8,-18 L8,-18 L14,-12 L14,-6 L0,-6 L0,6 L14,6 L14,18 L-6,18 L-14,10 Z" fill="#9b9b9b" stroke-width="2.4"/><path d="M-14,-12 L-6,-12 L0,-18 M-6,-12 L-6,18" fill="none"/><path d="M-14,-12 L-8,-18 L8,-18 L14,-12 Z" fill="#c4c4c4" stroke-width="2.4"/><path d="M-14,-12 L-6,-12 L-6,18 L-14,10 Z" fill="#c4c4c4"/></g>
<g transform="translate(2208,117)" ><path d="M-17,-11 C-17,-14 -14,-15 -11,-15 L-2,-15 L-2,0 L3,0 L3,-18 L17,-6 L17,10 C17,14 14,16 10,16 L-8,16 C-14,16 -17,12 -17,7 Z" fill="#d8d8d8"/><path d="M-11,-15 L-11,4 C-11,7 -9,8 -6,8 L8,8 L17,16 M-2,0 L-11,0" fill="none" stroke-width="1.6"/><path d="M-8,8 L6,8 L15,16 L-8,16 C-12,16 -14,12 -10,8 Z" fill="#a0a0a0" stroke="none"/></g>
<g transform="translate(2317,117)" ><g stroke="none" fill="#000"><rect x="-1.800" y="-15" width="3.6" height="27"/><path d="M-10,12 L10,12 L13,18 L-13,18 Z"/><rect x="-15" y="-12" width="30" height="2.4"/><circle cx="0" cy="-15" r="2.6"/><path d="M-20,3 A7.500,7.500 0 0 0 -5,3 Z"/><path d="M5,3 A7.500,7.500 0 0 0 20,3 Z"/><path d="M-12.500,-11 L-19,3 L-17.500,3 L-12.500,-8 L-7.500,3 L-6,3 Z"/><path d="M12.500,-11 L19,3 L17.500,3 L12.500,-8 L7.500,3 L6,3 Z"/></g></g>
<circle cx="2338" cy="110" r="12" fill="#7d9fd0" stroke="none"/><circle cx="2338" cy="110" r="3.4" fill="#fff" stroke="none"/><circle cx="2338" cy="102.500" r="1.800" fill="#fff" stroke="none"/><circle cx="2338" cy="117.500" r="1.800" fill="#fff" stroke="none"/>
<g transform="translate(2433,117)" ><path d="M-13,-16 C-17,-16 -16,-11 -16,-7 C-16,-3 -17,-1 -20,0 C-17,1 -16,3 -16,7 C-16,11 -17,16 -13,16" fill="none"/><path d="M13,2 C17,2 16,5 16,8 C16,12 17,16 13,16" fill="none"/><path d="M-10,-4 L2,-10 L13,-4 L13,8 L1,14 L-10,8 Z" fill="#fff" stroke-width="1.800"/><path d="M-10,-4 L1,2 L13,-4 M1,2 L1,14" fill="none" stroke-width="1.800"/><path d="M8,-19 L8,-3" fill="none"/><circle cx="8" cy="-11" r="4" fill="#2b2b2b"/></g>
</g>
<g stroke="#2f2f2f" stroke-width="4.6" fill="none" stroke-linejoin="miter" stroke-linecap="square">
<path d="M751,112 L759,120 L767,112"/>
<path d="M863,112 L871,120 L879,112"/>
<path d="M1035,112 L1043,120 L1051,112"/>
<path d="M1419,112 L1427,120 L1435,112"/>
<path d="M1735,112 L1743,120 L1751,112"/>
<path d="M1915,112 L1923,120 L1931,112"/>
<path d="M2027,112 L2035,120 L2043,112"/>
<path d="M2139,112 L2147,120 L2155,112"/>
<path d="M2251,112 L2259,120 L2267,112"/>
<path d="M2363,112 L2371,120 L2379,112"/>
<path d="M2463,112 L2471,120 L2479,112"/>
</g>
<g fill="#d6d6d6">
<rect x="220" y="92" width="4" height="51" rx="1.5"/>
<rect x="397" y="92" width="4" height="51" rx="1.5"/>
<rect x="781" y="92" width="4" height="51" rx="1.5"/>
<rect x="1337" y="92" width="4" height="51" rx="1.5"/>
<rect x="1517" y="92" width="4" height="51" rx="1.5"/>
<rect x="1833" y="92" width="4" height="51" rx="1.5"/>
<rect x="1945" y="92" width="4" height="51" rx="1.5"/>
<rect x="2057" y="92" width="4" height="51" rx="1.5"/>
<rect x="2169" y="92" width="4" height="51" rx="1.5"/>
<rect x="2281" y="92" width="4" height="51" rx="1.5"/>
<rect x="2393" y="92" width="4" height="51" rx="1.5"/>
</g>
</svg>
<!-- view cube & right panel -->
<svg width="3023" height="1647" viewBox="0 0 3023 1647" style="left:0;top:0;pointer-events:none;">
<g fill="#e4e7eb">
<path d="M2844,184 L2859,203 L2829,203 Z"/>
<path d="M2844,482 L2859,463 L2829,463 Z"/>
<path d="M2694,332 L2713,318 L2713,346 Z"/>
<path d="M2994,332 L2975,318 L2975,346 Z"/>
<path d="M2799,199 C2775,207 2757,220 2745,236 L2739,231 L2737,251 L2758,248 L2752,243 C2763,229 2780,217 2803,209 Z"/>
<path d="M2889,199 C2913,207 2931,220 2943,236 L2949,231 L2951,251 L2930,248 L2936,243 C2925,229 2908,217 2885,209 Z"/>
</g>
<path d="M2839,248 Q2843,246 2850,248 L2916,276 Q2923,280 2923,288 L2923,368 Q2923,376 2917,380 L2872,420 Q2865,426 2857,422 L2772,388 Q2765,384 2765,376 L2765,300 Q2765,292 2771,288 Z" fill="#e4e7eb"/>
<g fill="#fff" stroke="#fff" stroke-width="7" stroke-linejoin="round">
<path d="M2797,287 L2838,262 L2891,276 L2872,298 L2828,299 Z"/>
<path d="M2784,320 L2847,335 L2847,399 L2782,385 Z"/>
<path d="M2878,327 L2912,306 L2912,362 L2878,392 Z"/>
</g>
<ellipse cx="2778" cy="298" rx="5" ry="9" transform="rotate(25 2778 298)" fill="#f4f5f7"/>
<circle cx="2855" cy="318" r="5" fill="#f4f5f7"/><circle cx="2859" cy="408" r="5" fill="#f4f5f7"/><ellipse cx="2908" cy="283" rx="4" ry="8" transform="rotate(-35 2908 283)" fill="#f4f5f7"/>
<path d="M2865,424 L2865,324" stroke="#1a22c8" stroke-width="2.600"/>
<path d="M2865,424 L2924,375" stroke="#c8372a" stroke-width="2.600"/>
<path d="M2865,424 L2764,396" stroke="#3f9a2f" stroke-width="2.600"/>
<text x="2865" y="318" text-anchor="middle" font-family="Liberation Sans, sans-serif" font-size="27" font-weight="bold" fill="#1a22c8">Z</text>
<text x="2933" y="377" text-anchor="middle" font-family="Liberation Sans, sans-serif" font-size="26" fill="#c8372a">X</text>
<text x="2749" y="401" text-anchor="middle" font-family="Liberation Sans, sans-serif" font-size="26" fill="#3f9a2f">Y</text>
<text transform="translate(2815,359) rotate(15) scale(1,1.12)" text-anchor="middle" font-family="Liberation Sans, sans-serif" font-size="22" fill="#111" y="8">Left</text>
<text transform="translate(2895,348) rotate(-46) skewX(-12) scale(0.86,1)" text-anchor="middle" font-family="Liberation Sans, sans-serif" font-size="19" fill="#111" y="6">Front</text>
<text transform="translate(2843,282) rotate(-24)" text-anchor="middle" font-family="Liberation Sans, sans-serif" font-size="18" fill="#111" y="6">Top</text>
<g transform="translate(2934.500,465)"><path d="M0,-18 L17,-12 L17,8 L2,18 L-17,10 L-17,-10 Z" fill="#ececec" stroke="#2b2b2b" stroke-width="2" stroke-linejoin="round"/><path d="M-17,-10 L2,-3 L17,-12 L0,-18 Z" fill="#fdfdfd" stroke="#2b2b2b" stroke-width="1.600" stroke-linejoin="round"/><path d="M-17,-10 L2,-3 L2,18 L-17,10 Z" fill="#a9a9a9" stroke="#2b2b2b" stroke-width="1.600" stroke-linejoin="round"/></g>
<path d="M2968,461 L2984,461 L2976,469 Z" fill="#333"/>
<g fill="#fff" stroke="#9c9c9c" stroke-width="2"><rect x="2961" y="677" width="80" height="264"/><path d="M2961,743 L3023,743 M2961,809 L3023,809 M2961,875 L3023,875" fill="none"/><rect x="2961" y="963" width="80" height="66"/></g>
<g transform="translate(2993,712)" stroke="#2b2b2b" stroke-width="1.200" stroke-linejoin="round"><path d="M-13,2 L1,-19 Q4,-21 8,-18 L10,-15 L-4,4 Z" fill="#6e6e6e"/><path d="M-6,3 L10,-12 Q13,-13 16,-9 L17,-5 L2,6 Z" fill="#b0b0b0"/><rect x="-19" y="4" width="38" height="12" rx="3" fill="#fff"/><path d="M-6,4 L-6,16 M7,4 L7,16" fill="none"/><rect x="7" y="4" width="12" height="12" rx="2" fill="#d4d4d4"/><circle cx="-13" cy="10" r="2.200" fill="#fff"/></g>
<g transform="translate(2993,777)"><path d="M-2,-9 L16,-3 L16,11 L4,18 L-12,12 L-12,-2 Z" fill="#fff" stroke="#2b2b2b" stroke-width="2" stroke-linejoin="round"/><path d="M-12,-2 L4,4 L16,-3 M4,4 L4,18" fill="none" stroke="#2b2b2b" stroke-width="2"/><rect x="-20" y="-18" width="20" height="15" fill="#3f66c4"/><path d="M-20,-13 L0,-13 M-20,-8 L0,-8 M-13.3,-18 L-13.3,-3 M-6.6,-18 L-6.6,-3" stroke="#fff" stroke-width="1.400" fill="none"/></g>
<g transform="translate(2993,843)"><path d="M-13,-4 C-17,-4 -15,3 -16,5 C-16,7 -18,8 -19,8 C-18,8 -16,9 -16,11 C-15,13 -17,19 -13,19" fill="none" stroke="#2b2b2b" stroke-width="2"/><path d="M14,-10 C18,-10 16,0 17,3 C17,5 19,6 20,6 C19,6 17,7 17,9 C16,12 18,19 14,19" fill="none" stroke="#2b2b2b" stroke-width="2"/><path d="M-1,-6 L12,-1 L12,9 L2,14 L-10,10 L-10,0 Z" fill="#fff" stroke="#2b2b2b" stroke-width="1.800" stroke-linejoin="round"/><path d="M-10,0 L2,4 L12,-1 M2,4 L2,14" fill="none" stroke="#2b2b2b" stroke-width="1.800"/><rect x="-20" y="-18" width="20" height="15" fill="#5e5e5e"/><path d="M-20,-13 L0,-13 M-20,-8 L0,-8 M-13.3,-18 L-13.3,-3 M-6.6,-18 L-6.6,-3" stroke="#fff" stroke-width="1.400" fill="none"/></g>
<g transform="translate(2993,909)"><path d="M-15,-4 C-21,3 -21,11 -15,18" fill="none" stroke="#2b2b2b" stroke-width="3"/><path d="M15,-12 C21,-3 21,9 15,18" fill="none" stroke="#2b2b2b" stroke-width="3"/><text x="1" y="13" text-anchor="middle" font-family="Liberation Serif, serif" font-style="italic" font-weight="bold" font-size="34" fill="#2b2b2b">x</text><rect x="-20" y="-18" width="20" height="15" fill="#5e5e5e"/><path d="M-20,-13 L0,-13 M-20,-8 L0,-8 M-13.3,-18 L-13.3,-3 M-6.6,-18 L-6.6,-3" stroke="#fff" stroke-width="1.400" fill="none"/></g>
<rect x="2970" y="972" width="47" height="47" rx="6" fill="#dcdcdc"/><rect x="2975" y="977" width="38" height="38" fill="#2f5bd0" stroke="#111" stroke-width="2"/>
<path d="M2979,985 C2984,982 2990,983 2994,986 C2998,983 3004,982 3009,985 L3009,1007 C3004,1005 2998,1005 2994,1008 C2990,1005 2984,1005 2979,1007 Z" fill="#fff" stroke="#111" stroke-width="1.400" stroke-linejoin="round"/><path d="M2994,986 L2994,1008" stroke="#111" stroke-width="1.400"/>
</svg>
<!-- misc icons -->
<svg width="3023" height="1647" viewBox="0 0 3023 1647" style="left:0;top:0;pointer-events:none;">
<g transform="translate(28.8,41.8)"><polygon points="0.00,-21.80 18.88,-10.90 18.88,10.90 0.00,21.80 -18.88,10.90 -18.88,-10.90" fill="#6bb549"/><polygon points="7,-18 18.9,-10.9 18.9,10.9 11,16.5 7.6,9 12.1,7 12.1,-7 3.8,-11.7" fill="#7dbd5e"/><polygon points="0.00,-14.00 12.12,-7.00 12.12,7.00 0.00,14.00 -12.12,7.00 -12.12,-7.00" fill="#f8f8f8"/><g stroke="#f8f8f8" stroke-width="2.8"><path d="M8.6,-20.5 L2.4,-9.2"/><path d="M-21.5,2.5 L-6.5,10.1"/><path d="M6.6,7 L12.2,18.6"/></g><polygon points="0.00,-8.60 7.45,-4.30 7.45,4.30 0.00,8.60 -7.45,4.30 -7.45,-4.30" fill="none" stroke="#5c5c5c" stroke-width="3.3" stroke-dasharray="14.2 3" stroke-dashoffset="-4"/></g>
<g fill="#2f2f2f"><rect x="226" y="29.500" width="32" height="5.6"/><rect x="226" y="41.500" width="32" height="5.6"/><rect x="226" y="53.500" width="32" height="5.6"/></g>
<g transform="translate(1202,45)"><g fill="none" stroke="#333" stroke-width="3.4" stroke-linecap="round"><rect x="-15" y="-4.500" width="17" height="9" rx="4.500" transform="rotate(-40) translate(-1,0)"/><rect x="-2" y="-4.500" width="17" height="9" rx="4.500" transform="rotate(-40) translate(1,0)"/></g></g>
<g transform="translate(1261,42)"><g fill="#2a4fa8"><path d="M-18,-6 L1,-15 L19,-7 L1,2 Z"/><path d="M-9,-1 L1,4 L11,-1 L11,7 C5,12 -3,12 -9,7 Z"/><rect x="-17" y="-5" width="2.400" height="16"/><path d="M-19,10 L-13,10 L-14,18 L-18,18 Z"/></g></g>
<g transform="translate(2241,45)"><g fill="none" stroke="#636363" stroke-width="4.2"><path d="M-9,-16 C-15,-16 -14,-10 -14,-6 C-14,-2 -15,0 -19,0 C-15,0 -14,2 -14,6 C-14,10 -15,16 -9,16"/><path d="M9,-16 C15,-16 14,-10 14,-6 C14,-2 15,0 19,0 C15,0 14,2 14,6 C14,10 15,16 9,16"/><path d="M-8,0 L-2,6 L9,-6" stroke-width="5"/></g></g>
<g transform="translate(2305,45)"><path d="M0,-18 C2,-18 3,-17 3,-15 C9,-13 11,-8 11,-2 C11,5 13,9 16,11 L16,13 L-16,13 L-16,11 C-13,9 -11,5 -11,-2 C-11,-8 -9,-13 -3,-15 C-3,-17 -2,-18 0,-18 Z M-4,14.500 L4,14.500 C4,17 2,18 0,18 C-2,18 -4,17 -4,14.500 Z" fill="#636363"/></g>
<g transform="translate(2369,45)"><rect x="-14.500" y="-16.500" width="29" height="33" rx="4" fill="none" stroke="#636363" stroke-width="3.4"/><g fill="#636363"><rect x="0" y="-10" width="10" height="3.6"/><rect x="0" y="-2" width="10" height="3.6"/><rect x="0" y="6" width="10" height="3.6"/></g><g fill="none" stroke="#636363" stroke-width="2"><path d="M-10,-8 L-7.500,-5.500 L-3,-11"/><path d="M-10,0 L-7.500,2.500 L-3,-3"/><path d="M-10,8 L-7.500,10.500 L-3,5"/></g></g>
<g transform="translate(2433,45)"><g fill="none" stroke="#636363" stroke-width="3.6"><rect x="-16" y="-16" width="12.500" height="12.500" rx="1.500"/><rect x="-16" y="4" width="12.500" height="12.500" rx="1.500"/><rect x="3.500" y="4" width="12.500" height="12.500" rx="1.500"/><path d="M10,-18 L10,-1 M1.500,-9.500 L18.500,-9.500" stroke-width="4"/></g></g>
<g transform="translate(2497,45)"><path d="M-3,-18 C8,-19 15,-11 14,-2 L17,4 L14,6 L14,12 L7,12 L7,18 L-10,18 L-10,10 C-16,6 -18,0 -16,-7 C-14,-14 -9,-18 -3,-18 Z" fill="#636363"/><circle cx="-5" cy="-1" r="5" fill="none" stroke="#f7f7f7" stroke-width="3" stroke-dasharray="2.6 1.6"/><circle cx="-5" cy="-1" r="2.600" fill="none" stroke="#f7f7f7" stroke-width="2"/><circle cx="4" cy="-9" r="3.600" fill="none" stroke="#f7f7f7" stroke-width="2.4" stroke-dasharray="2 1.3"/></g>
<g transform="translate(2695,45)"><circle r="18" fill="#666"/><text x="0" y="10" text-anchor="middle" font-family="Liberation Sans, sans-serif" font-weight="bold" font-size="29" fill="#fff">?</text></g>
<path d="M2729,40.500 L2745,40.500 L2737,48.500 Z" fill="#333"/>
<path d="M2996,36 L3012,36 L3004,44 Z" fill="#333"/>
<rect x="2769" y="21" width="46" height="46" fill="#fff"/>
<g transform="translate(2792,46)"><path d="M-14,-4 L-17,-14 L-6,-9 Z M8,-9 L9,-22 L16,-6 Z" fill="#e8a24f" stroke="#5a3a1a" stroke-width="1"/><path d="M-13,-3 C-10,-11 10,-12 14,-3 C15,6 8,10 0,10 C-8,10 -14,6 -13,-3 Z" fill="#f0b060" stroke="#5a3a1a" stroke-width="1"/><path d="M-4,-6 C-2,0 -6,8 0,9 C6,8 2,0 4,-6 Z" fill="#fff"/><circle cx="-6" cy="-1" r="1.500" fill="#222"/><circle cx="6" cy="-1" r="1.500" fill="#222"/><ellipse cx="0" cy="2" rx="2" ry="1.400" fill="#222"/><path d="M-2,5 L2,5 L1,10 L-1,10 Z" fill="#e0607a"/><ellipse cx="-13" cy="11" rx="5" ry="3.500" fill="#fff" stroke="#777" stroke-width="1"/><ellipse cx="13" cy="11" rx="5" ry="3.500" fill="#fff" stroke="#777" stroke-width="1"/><path d="M-21,11 L21,11" stroke="#aaa" stroke-width="1"/></g>
<g transform="translate(39,120.5)"><g fill="none" stroke="#2f2f2f" stroke-width="3.6"><circle cx="-12" cy="-11" r="5.500"/><path d="M-12,-5 L-12,10"/><path d="M-12,8 C-12,0 -2,2 2,-4"/><path d="M1,-17 L20,-17 M9,-7 L20,-7 M1,3 L20,3 M1,13 L20,13" stroke-width="3.8"/></g><circle cx="-12" cy="12" r="4" fill="#2f2f2f"/><circle cx="3" cy="-5" r="4" fill="#2f2f2f"/></g>
<g transform="translate(39,188)"><path d="M-8,-18 L-8,18" stroke="#2f2f2f" stroke-width="3.6" stroke-dasharray="4 3.5" fill="none"/><circle cx="-8" cy="0" r="6.500" fill="#2f2f2f"/><path d="M9,4 L9,18 M2,11 L16,11" stroke="#2a4fa8" stroke-width="4" fill="none"/></g>
<g transform="translate(39,256)"><ellipse cx="0" cy="-2" rx="19.500" ry="13.500" fill="#2f2f2f"/><path d="M-10,8 L-17,17 L-2,11 Z" fill="#2f2f2f"/></g>
<g transform="translate(39,328)"><rect x="-15" y="-17" width="26" height="34" rx="4" fill="none" stroke="#2f2f2f" stroke-width="3.4"/><path d="M-9,-9 L5,-9 M-9,-2 L3,-2 M-9,5 L-3,5" stroke="#2f2f2f" stroke-width="3" fill="none"/><path d="M2,9 L16,-8 L20,-4 L6,12 L0,14 Z" fill="#2f2f2f" stroke="#f9f9f9" stroke-width="1.500"/></g>
<g transform="translate(41,397)"><circle cx="3" cy="2" r="14" fill="none" stroke="#2f2f2f" stroke-width="3.6"/><path d="M-3,-17 L9,-17 M3,-17 L3,-12 M14,-11 L17,-14" stroke="#2f2f2f" stroke-width="3.2" fill="none"/><path d="M3,2 L9,-5" stroke="#2f2f2f" stroke-width="3" fill="none"/><path d="M-20,-4 L-10,-4 M-22,2 L-12,2 M-20,8 L-10,8" stroke="#2f2f2f" stroke-width="2.6" fill="none"/></g>
<g transform="translate(39,466)"><circle cx="0" cy="0" r="19.500" fill="#2f2f2f"/><path d="M10,12 L20,20 L14,8 Z" fill="#2f2f2f"/><path d="M0,-12 L10,-6 L10,6 L0,12 L-10,6 L-10,-6 Z" fill="none" stroke="#f9f9f9" stroke-width="2.6"/><path d="M0,-6 L5,-3 L5,3 L0,6 L-5,3 L-5,-3 Z" fill="none" stroke="#f9f9f9" stroke-width="2"/><path d="M-10,-6 L0,0 L0,12" fill="none" stroke="#f9f9f9" stroke-width="2"/></g>
<rect x="0" y="503" width="79" height="2" fill="#d8d8d8"/>
<g transform="translate(39,540)"><rect x="-14.500" y="-16.500" width="29" height="33" rx="4" fill="none" stroke="#2f2f2f" stroke-width="3.6"/><g fill="#2f2f2f"><rect x="0" y="-10" width="10" height="3.6"/><rect x="0" y="-2" width="10" height="3.6"/><rect x="0" y="6" width="10" height="3.6"/></g><g fill="none" stroke="#2f2f2f" stroke-width="2"><path d="M-10,-8 L-7.500,-5.500 L-3,-11"/><path d="M-10,0 L-7.500,2.500 L-3,-3"/><path d="M-10,8 L-7.500,10.500 L-3,5"/></g></g>
<g transform="translate(39,1616)"><path d="M-18,-14 L15,-14 C17,-14 18,-13 18,-11 L18,4 L-9,4 C-14,4 -18,0 -18,-4 Z" fill="#2f2f2f"/><circle cx="3" cy="2" r="9" fill="#f9f9f9" stroke="#2f2f2f" stroke-width="3.6"/><path d="M9,9 L17,18" stroke="#2f2f2f" stroke-width="4.600" stroke-linecap="round"/></g>
<g transform="translate(117,200)"><path d="M-14,-13 L14,-13 L3,0 L3,14 L-3,10 L-3,0 Z" fill="none" stroke="#2f2f2f" stroke-width="2.4" stroke-linejoin="round"/></g>
<g transform="translate(309,261)"><path d="M-16,-12 L-5,-12 L-2,-8 L17,-8 L17,12 L-16,12" fill="none" stroke="#aaa" stroke-width="2"/><path d="M-16,12 L-16,-12" stroke="#aaa" stroke-width="2" stroke-dasharray="3 3"/><path d="M-7,-5 L-7,9 M-14,2 L0,2" stroke="#8a9fd4" stroke-width="3.4" fill="none"/></g>
<rect x="357" y="247" width="9" height="27" fill="#a6a6a6"/><rect x="375" y="247" width="9" height="27" fill="#a6a6a6"/>
<g transform="translate(430,262)"><circle cx="0" cy="2" r="13.500" fill="none" stroke="#2f2f2f" stroke-width="3.6"/><path d="M-5,-17 L5,-17 M0,-17 L0,-12 M11,-10 L14,-13" stroke="#2f2f2f" stroke-width="3.2" fill="none"/><path d="M0,2 L7,9" stroke="#2f2f2f" stroke-width="2.6" fill="none"/></g>
<g transform="translate(400,314)"><path d="M0,-18 L0,18" stroke="#2f2f2f" stroke-width="3.2" stroke-dasharray="3.5 3" fill="none"/><circle r="5.500" fill="#2f2f2f"/></g>
<path d="M95,305 L105,315 L95,325" fill="none" stroke="#555" stroke-width="4.4" stroke-linejoin="miter"/>
<path d="M95,357 L105,367 L95,377" fill="none" stroke="#555" stroke-width="4.4" stroke-linejoin="miter"/>
<path d="M95,773 L105,783 L95,793" fill="none" stroke="#555" stroke-width="4.4" stroke-linejoin="miter"/>
<path d="M95,825 L105,835 L95,845" fill="none" stroke="#555" stroke-width="4.4" stroke-linejoin="miter"/>
<path d="M95,877 L105,887 L95,897" fill="none" stroke="#555" stroke-width="4.4" stroke-linejoin="miter"/>
<path d="M90,413 L100,423 L110,413" fill="none" stroke="#555" stroke-width="4.4" stroke-linejoin="miter"/>
<path d="M90,1039 L100,1049 L110,1039" fill="none" stroke="#555" stroke-width="4.4" stroke-linejoin="miter"/>
<g transform="translate(147,367)"><path d="M-14,-10.500 L-4,-10.500 L-1,-7 L14,-7 L14,11 L-14,11 Z" fill="#fff" stroke="#555" stroke-width="1.800" stroke-linejoin="round"/></g>
<g transform="translate(147,419)"><path d="M-14,-10.500 L-4,-10.500 L-1,-7 L14,-7 L14,11 L-14,11 Z" fill="#fff" stroke="#555" stroke-width="1.800" stroke-linejoin="round"/></g>
<g transform="translate(147,783)"><path d="M-14,-10.500 L-4,-10.500 L-1,-7 L14,-7 L14,11 L-14,11 Z" fill="#fff" stroke="#a8a8a8" stroke-width="1.800" stroke-linejoin="round"/></g>
<g transform="translate(147,835)"><path d="M-14,-10.500 L-4,-10.500 L-1,-7 L14,-7 L14,11 L-14,11 Z" fill="#fff" stroke="#a8a8a8" stroke-width="1.800" stroke-linejoin="round"/></g>
<g transform="translate(147,887)"><path d="M-14,-10.500 L-4,-10.500 L-1,-7 L14,-7 L14,11 L-14,11 Z" fill="#fff" stroke="#a8a8a8" stroke-width="1.800" stroke-linejoin="round"/></g>
<g transform="translate(147,315)"><path d="M0,-14 L13,-7 L13,7 L0,14 L-13,7 L-13,-7 Z" fill="#e4e4e4" stroke="#555" stroke-width="1.800" stroke-linejoin="round"/><path d="M-13,-7 L0,0 L13,-7 M0,0 L0,14" fill="none" stroke="#555" stroke-width="1.800"/><path d="M0,0 L13,-7 L13,7 L0,14 Z" fill="#c4c4c4" stroke="#555" stroke-width="1.800" stroke-linejoin="round"/></g>
<g transform="translate(145,471)"><path d="M-12,10 L-8,1 L7,-14 L13,-8 L-2,7 Z" fill="#fff" stroke="#a0a0a0" stroke-width="1.800" stroke-linejoin="round"/><path d="M-8,1 L-2,7" stroke="#a0a0a0" stroke-width="1.600"/><path d="M-15,13 L15,13" stroke="#9fb0dc" stroke-width="2"/></g>
<g transform="translate(145,627)"><path d="M-12,10 L-8,1 L7,-14 L13,-8 L-2,7 Z" fill="#fff" stroke="#444" stroke-width="1.800" stroke-linejoin="round"/><path d="M-8,1 L-2,7" stroke="#444" stroke-width="1.600"/><path d="M-15,13 L15,13" stroke="#2a4fa8" stroke-width="2"/></g>
<g transform="translate(145,523)"><path d="M-14,-14 L9,-14 L14,-9 L14,14 L-9,14 L-14,9 Z" fill="#fff" stroke="#444" stroke-width="1.800" stroke-linejoin="round"/><path d="M-14,-14 L-9,-9 L14,-9 M-9,-9 L-9,14" fill="none" stroke="#444" stroke-width="1.600"/><path d="M-6,-3 L10,-3 L14,1 L14,14 L-2,14 L-6,10 Z" fill="#a4a4a4" stroke="#444" stroke-width="1.400" stroke-linejoin="round"/><rect x="-2" y="1" width="16" height="13" fill="#8a8a8a" stroke="#444" stroke-width="1.400"/></g>
<g transform="translate(145,679)"><path d="M-14,-14 L9,-14 L14,-9 L14,14 L-9,14 L-14,9 Z" fill="#fff" stroke="#444" stroke-width="1.800" stroke-linejoin="round"/><path d="M-14,-14 L-9,-9 L14,-9 M-9,-9 L-9,14" fill="none" stroke="#444" stroke-width="1.600"/><path d="M-6,-3 L10,-3 L14,1 L14,14 L-2,14 L-6,10 Z" fill="#a4a4a4" stroke="#444" stroke-width="1.400" stroke-linejoin="round"/><rect x="-2" y="1" width="16" height="13" fill="#8a8a8a" stroke="#444" stroke-width="1.400"/></g>
<g transform="translate(145,575)"><path d="M-14,-14 L-9,-14 L-5,-10 L-5,2 L0,2 L0,14 L-9,14 L-14,9 Z" fill="#fff" stroke="#444" stroke-width="1.700" stroke-linejoin="round"/><path d="M-14,-14 L-9,-9 L-9,14 M-9,-9 L-5,-9" fill="none" stroke="#444" stroke-width="1.400"/><path d="M-3,-11 L3,-5 L3,12 L-3,6 Z" fill="#c8c8c8"/><path d="M6,-14 L11,-14 L14,-11 L14,14 L2,14 L2,2 L6,2 Z" fill="#8e8e8e" stroke="#444" stroke-width="1.700" stroke-linejoin="round"/></g>
<g transform="translate(107.5,938)"><circle r="14.800" fill="#f2f2f2" stroke="#a4a4a4" stroke-width="1.800"/><circle r="9.800" fill="none" stroke="#aaa" stroke-width="1.600"/><path d="M0,-9.500 L0,0 L9.500,0" fill="none" stroke="#aaa" stroke-width="1.600"/></g>
<g transform="translate(107.5,990)"><circle r="14.800" fill="#f2f2f2" stroke="#a4a4a4" stroke-width="1.800"/><circle r="9.800" fill="none" stroke="#aaa" stroke-width="1.600"/><path d="M0,-9.500 L0,0 L9.500,0" fill="none" stroke="#aaa" stroke-width="1.600"/></g>
<g transform="translate(144.7,1096)"><g fill="#fff" stroke="#444" stroke-width="1.700" stroke-linejoin="round"><path d="M-8.2,6.8 L-8.2,14.6 L15.3,14.6 L15.3,-7.8 L5.9,-7.8 L5.9,6.8 Z"/><path d="M5.9,-7.8 L15.3,-7.8 L8.2,-14.8 L-1.2,-14.8 Z"/><path d="M-8.2,6.8 L5.9,6.8 L-1.2,0.5 L-14.8,0.5 Z"/><path d="M-14.8,0.5 L-8.2,6.8 L-8.2,14.6 L-14.8,8.2 Z"/><path d="M-1.2,-14.8 L5.9,-7.8 L5.9,6.8 L-1.2,0.5 Z"/></g></g>
<g transform="translate(144.7,1148)"><g fill="#fff" stroke="#444" stroke-width="1.700" stroke-linejoin="round"><path d="M-8.2,6.8 L-8.2,14.6 L15.3,14.6 L15.3,-7.8 L5.9,-7.8 L5.9,6.8 Z"/><path d="M5.9,-7.8 L15.3,-7.8 L8.2,-14.8 L-1.2,-14.8 Z"/><path d="M-8.2,6.8 L5.9,6.8 L-1.2,0.5 L-14.8,0.5 Z"/><path d="M-14.8,0.5 L-8.2,6.8 L-8.2,14.6 L-14.8,8.2 Z"/><path d="M-1.2,-14.8 L5.9,-7.8 L5.9,6.8 L-1.2,0.5 Z"/></g></g>
<g transform="translate(144.7,1200)"><g fill="#fff" stroke="#444" stroke-width="1.700" stroke-linejoin="round"><path d="M-8.2,6.8 L-8.2,14.6 L15.3,14.6 L15.3,-7.8 L5.9,-7.8 L5.9,6.8 Z"/><path d="M5.9,-7.8 L15.3,-7.8 L8.2,-14.8 L-1.2,-14.8 Z"/><path d="M-8.2,6.8 L5.9,6.8 L-1.2,0.5 L-14.8,0.5 Z"/><path d="M-14.8,0.5 L-8.2,6.8 L-8.2,14.6 L-14.8,8.2 Z"/><path d="M-1.2,-14.8 L5.9,-7.8 L5.9,6.8 L-1.2,0.5 Z"/></g></g>
<g transform="translate(523,854)"><path d="M-10,-14 L-10,16 M-3,-10 L15,-10 M-3,0 L15,0 M-3,10 L15,10" fill="none" stroke="#2f2f2f" stroke-width="2.2"/><path d="M-16,-17 L-10,-11 L-4,-17" fill="none" stroke="#2f2f2f" stroke-width="2.2"/></g>
<path d="M943,242 L953,252 L971,230" fill="none" stroke="#fff" stroke-width="5.5"/>
<path d="M1001,231 L1023,253 M1023,231 L1001,253" fill="none" stroke="#b5333c" stroke-width="6.5"/>
<path d="M995,450 L1009,464 M1009,450 L995,464" fill="none" stroke="#555" stroke-width="2"/>
<path d="M995,994 L1009,1008 M1009,994 L995,1008" fill="none" stroke="#555" stroke-width="2"/>
<path d="M960,512 L976,512 L968,520 Z" fill="#333"/>
<path d="M998,531 L1018,512" stroke="#2b2b2b" stroke-width="5.500" fill="none"/><path d="M1031,499 L1024,527 L1005,508 Z" fill="#2b2b2b"/>
<path d="M1033,519 L1022,529" stroke="#999" stroke-width="2" fill="none"/><path d="M1019,532 L1021,524 L1027,530 Z" fill="#999"/>
<path d="M615,617 L625,627 L615,637" fill="none" stroke="#d0d0d0" stroke-width="4.4" stroke-linejoin="miter"/>
<path d="M615,672 L625,682 L615,692" fill="none" stroke="#d0d0d0" stroke-width="4.4" stroke-linejoin="miter"/>
<path d="M615,836 L625,846 L615,856" fill="none" stroke="#d0d0d0" stroke-width="4.4" stroke-linejoin="miter"/>
<g transform="translate(184,1613)"><path d="M-17,1 L0,-15 L6,-9 L6,-14 L11,-14 L11,-4 L17,1 L13,1 L13,16 L4,16 L4,5 L-4,5 L-4,16 L-13,16 L-13,1 Z" fill="#555"/></g>
<path d="M218,1588 L234,1614 L218,1640" fill="none" stroke="#d0d0d0" stroke-width="2"/>
<path d="M475,1588 L489,1588 L489,1640 L475,1640 L491,1614 Z" fill="#d9d9d9"/><path d="M475,1588 L491,1614 L475,1640" fill="none" stroke="#c8c8c8" stroke-width="1.500"/>
<g transform="translate(534,1612)"><circle r="13.500" fill="#8aa6d8"/><circle r="4.200" fill="#fff"/><circle cy="-8.500" r="2" fill="#fff"/><circle cy="8.500" r="2" fill="#fff"/></g>
<g transform="translate(937,1612)"><circle r="13.500" fill="#8aa6d8"/><circle r="4.200" fill="#fff"/><circle cy="-8.500" r="2" fill="#fff"/><circle cy="8.500" r="2" fill="#fff"/></g>
<g transform="translate(1342,1612)"><circle r="13.500" fill="#8aa6d8"/><circle r="4.200" fill="#fff"/><circle cy="-8.500" r="2" fill="#fff"/><circle cy="8.500" r="2" fill="#fff"/></g>
<g transform="translate(574,1614)"><path d="M-17,-16 L9,-16 L17,-8 L17,16 L-9,16 L-17,8 Z" fill="#fff" stroke="#333" stroke-width="2" stroke-linejoin="round"/><path d="M-11,-12 L5,-12 L9,-8 L9,10 L-7,10 L-11,6 Z" fill="#9a9a9a" stroke="#333" stroke-width="1.600" stroke-linejoin="round"/><path d="M-11,-12 L-7,-8 L9,-8 M-7,-8 L-7,10" fill="none" stroke="#333" stroke-width="1.400"/><path d="M-17,8 L-9,16" stroke="#333" stroke-width="1.600"/></g>
<g transform="translate(978,1614)"><path d="M-17,-16 L9,-16 L17,-8 L17,16 L-9,16 L-17,8 Z" fill="#fff" stroke="#333" stroke-width="2" stroke-linejoin="round"/><path d="M-11,-12 L5,-12 L9,-8 L9,10 L-7,10 L-11,6 Z" fill="#9a9a9a" stroke="#333" stroke-width="1.600" stroke-linejoin="round"/><path d="M-11,-12 L-7,-8 L9,-8 M-7,-8 L-7,10" fill="none" stroke="#333" stroke-width="1.400"/><path d="M-17,8 L-9,16" stroke="#333" stroke-width="1.600"/></g>
<g transform="translate(1382,1614)"><path d="M-15,-6 L-9,-9 L-2,-6 L-2,16 L-9,18 L-15,16 Z" fill="#fff" stroke="#333" stroke-width="1.800" stroke-linejoin="round"/><path d="M-9,-4 L-9,18 M-15,-6 L-9,-4 L-2,-6" fill="none" stroke="#333" stroke-width="1.400"/><path d="M0,-14 L8,-18 L16,-14 L16,16 L8,18 L0,16 Z" fill="#fff" stroke="#333" stroke-width="1.800" stroke-linejoin="round"/><path d="M8,-11 L8,18 M0,-14 L8,-11 L16,-14" fill="none" stroke="#333" stroke-width="1.400"/></g>
<g transform="translate(1746,1614)"><path d="M-15,-6 L-9,-9 L-2,-6 L-2,16 L-9,18 L-15,16 Z" fill="#fff" stroke="#333" stroke-width="1.800" stroke-linejoin="round"/><path d="M-9,-4 L-9,18 M-15,-6 L-9,-4 L-2,-6" fill="none" stroke="#333" stroke-width="1.400"/><path d="M0,-14 L8,-18 L16,-14 L16,16 L8,18 L0,16 Z" fill="#fff" stroke="#333" stroke-width="1.800" stroke-linejoin="round"/><path d="M8,-11 L8,18 M0,-14 L8,-11 L16,-14" fill="none" stroke="#333" stroke-width="1.400"/></g>
<g transform="translate(2984,1561)"><path d="M-19,10 L-19,6 A19,19 0 0 1 19,6 L19,10 Z" fill="none" stroke="#2f2f2f" stroke-width="2.600" stroke-linejoin="round"/><path d="M-10,8 A10,10 0 0 1 10,8" fill="none" stroke="#2f2f2f" stroke-width="2.600"/><circle cy="5" r="2.200" fill="#2f2f2f"/><path d="M-14,-3 L-11,-1 M-8,-9 L-6,-6 M0,-12 L0,-8 M8,-9 L6,-6 M14,-3 L11,-1" stroke="#2f2f2f" stroke-width="1.600"/></g>
</svg>
</body>
</html>
